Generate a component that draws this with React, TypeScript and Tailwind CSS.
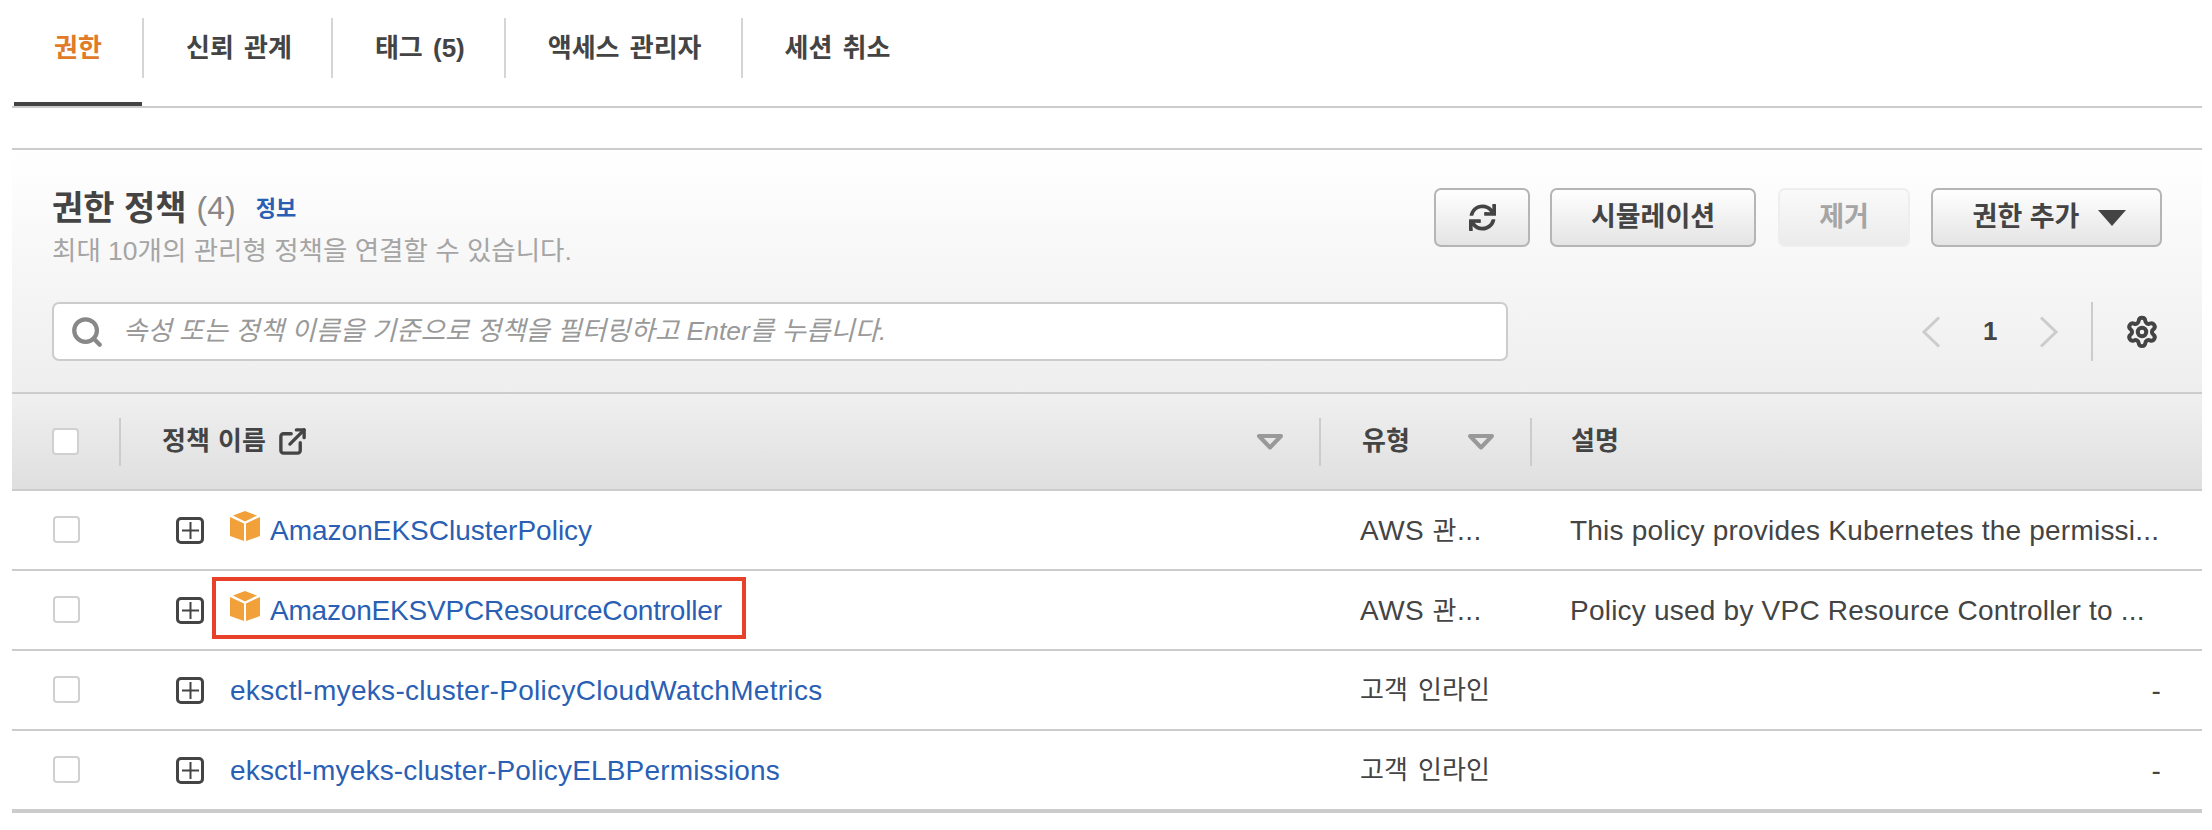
import { ExternalLink, Search, Settings } from 'lucide-react'
import { FaSync } from 'react-icons/fa'

const font = "font-['Liberation_Sans','Noto_Sans_CJK_KR',sans-serif]"
const grid = 'grid grid-cols-[109px_1200px_211px_670px]'

const tabs = ['권한', '신뢰 관계', '태그 (5)', '액세스 관리자', '세션 취소']

const policies = [
  { name: 'AmazonEKSClusterPolicy', aws: true, fit: '', desc: 'This policy provides Kubernetes the permissi...' },
  {
    name: 'AmazonEKSVPCResourceController',
    aws: true,
    marked: true,
    fit: 'tracking-[-0.19px]',
    desc: 'Policy used by VPC Resource Controller to ...',
  },
  { name: 'eksctl-myeks-cluster-PolicyCloudWatchMetrics', aws: false, fit: 'tracking-[0.3px]', desc: '-' },
  { name: 'eksctl-myeks-cluster-PolicyELBPermissions', aws: false, fit: 'tracking-[0.17px]', desc: '-' },
]

function Checkbox({ row }: { row?: boolean }) {
  return <div className={`h-[27px] w-[27px] rounded-[4px] border-2 border-[#d0d0d0] bg-white ${row ? 'mb-[2px]' : ''}`} />
}

function SortIcon() {
  return (
    <svg width="30" height="18" viewBox="0 0 30 18" fill="none">
      <path d="M4 3h22L15 14.500z" stroke="#999" strokeWidth="4" strokeLinejoin="round" />
    </svg>
  )
}

function HeaderDivider() {
  return <div className="h-[48px] w-[2px] shrink-0 bg-[#ccc]" />
}

function AwsCube() {
  return (
    <svg width="30" height="30" viewBox="0 0 30 30" className="mb-[8px] mr-[10px] shrink-0" fill="#f2a03a">
      <path d="M15 0l12 4.500-12 6-12-6z" />
      <path d="M0 6l14 6.500V30L0 25z" />
      <path d="M30 6l-14 6.500V30l14-5z" />
    </svg>
  )
}

function ExpandIcon() {
  return (
    <div className="-ml-[1px] mr-[26px] flex h-[27px] w-[28px] shrink-0 items-center justify-center rounded-[5px] border-[3px] border-[#444]">
      <svg width="19" height="19" viewBox="0 0 19 19" stroke="#444" strokeWidth="2">
        <path d="M9.500 1v17M1 9.500h17" />
      </svg>
    </div>
  )
}

function Chevron({ flip }: { flip?: boolean }) {
  return (
    <svg width="20" height="32" viewBox="0 0 20 32" fill="none" stroke="#ccc" strokeWidth="3" className={flip ? 'rotate-180' : ''}>
      <path d="M18 1.500L3 16l15 14.500" />
    </svg>
  )
}

export default function App() {
  return (
    <div className={`${font} h-[830px] w-[2212px] overflow-hidden bg-white pl-[12px] pr-[10px] text-[#444]`}>
      <div className="flex h-[108px] border-b-2 border-[#ccc] [word-spacing:3px]">
        {tabs.map((tab, i) => (
          <div key={tab} className={`h-[106px] pt-[18px] ${i === 0 ? 'ml-[2px] w-[128px] border-b-4 border-[#444]' : ''}`}>
            <div
              className={`flex h-[60px] items-center text-[26px] font-bold ${
                i === 0 ? 'pl-[40px] text-[#e07b27]' : 'border-l-2 border-[#d5d5d5] pl-[42px] pr-[39px]'
              }`}>
              {tab}
            </div>
          </div>
        ))}
      </div>

      <div className="mt-[40px] flex h-[244px] flex-col border-t-2 border-[#ccc] bg-gradient-to-b from-white to-[#eeeeee] pt-[38px] pl-[40px] pr-[40px]">
        <div className="flex items-start justify-between">
          <div>
            <div className="flex h-[38px] translate-y-[1px] items-center">
              <span className="text-[34px] font-bold">권한 정책</span>
              <span className="ml-[10px] text-[32px] text-[#888]">(4)</span>
              <span className="ml-[20px] text-[22px] font-bold text-[#2a5fb4]">정보</span>
            </div>
            <div className="mt-[8px] h-[33px] text-[26.5px] leading-[34px] text-[#a5a5a5]">최대 10개의 관리형 정책을 연결할 수 있습니다.</div>
          </div>
          <div className="flex">
            <button className="flex h-[59px] w-[96px] items-center justify-center rounded-[7px] border-2 border-[#b5b5b5] bg-gradient-to-b from-white to-[#e4e4e4]">
              <FaSync size={27} color="#444" />
            </button>
            <button className="ml-[20px] flex h-[59px] w-[206px] items-center justify-center rounded-[7px] border-2 border-[#b5b5b5] bg-gradient-to-b from-white to-[#e4e4e4] text-[27px] font-bold">
              시뮬레이션
            </button>
            <button className="ml-[22px] flex h-[59px] w-[132px] items-center justify-center rounded-[7px] border-2 border-[#eee] bg-gradient-to-b from-[#fafafa] to-[#ebebeb] text-[27px] font-bold text-[#a5a5a5]">
              제거
            </button>
            <button className="ml-[21px] flex h-[59px] w-[231px] items-center justify-center gap-[19px] rounded-[7px] border-2 border-[#b5b5b5] bg-gradient-to-b from-white to-[#e4e4e4] pl-[6px] text-[27px] font-bold">
              권한 추가
              <svg width="28" height="16" viewBox="0 0 28 16" fill="#444">
                <path d="M0 0h28L14 16z" />
              </svg>
            </button>
          </div>
        </div>

        <div className="mt-[35px] flex items-center">
          <div className="flex h-[59px] w-[1456px] items-center rounded-[7px] border-2 border-[#ccc] bg-white pl-[16px]">
            <Search size={34} strokeWidth={3} color="#888" className="mr-[19px] shrink-0" />
            <span className="text-[26.5px] italic text-[#999]">속성 또는 정책 이름을 기준으로 정책을 필터링하고 Enter를 누릅니다.</span>
          </div>
          <div className="ml-[413px] flex items-center">
            <Chevron />
            <span className="mx-[42px] text-[26px] font-bold">1</span>
            <Chevron flip />
          </div>
          <div className="ml-[32px] h-[59px] w-[2px] bg-[#ccc]" />
          <Settings size={34} strokeWidth={2.8} color="#444" className="ml-[32px]" />
        </div>
      </div>

      <div className={`${grid} h-[99px] items-center border-t-2 border-b-2 border-[#ccc] bg-gradient-to-b from-[#f0f0f0] to-[#dfdfdf]`}>
        <div className="flex items-center justify-between pl-[40px]">
          <Checkbox />
          <HeaderDivider />
        </div>
        <div className="flex items-center justify-between pl-[41px]">
          <div className="flex items-center gap-[11px] text-[26px] font-bold [word-spacing:1px]">
            정책 이름
            <ExternalLink size={31} strokeWidth={2.6} color="#444" />
          </div>
          <div className="flex items-center gap-[34px]">
            <SortIcon />
            <HeaderDivider />
          </div>
        </div>
        <div className="flex items-center justify-between pl-[41px]">
          <span className="text-[26px] font-bold">유형</span>
          <div className="flex items-center gap-[34px]">
            <SortIcon />
            <HeaderDivider />
          </div>
        </div>
        <div className="pl-[39px] text-[26px] font-bold">설명</div>
      </div>

      {policies.map((policy, i) => (
        <div key={policy.name} className={`${grid} items-center border-[#ccc] ${i === 3 ? 'h-[82px] border-b-4' : 'h-[80px] border-b-2'}`}>
          <div className="pl-[41px]">
            <Checkbox row />
          </div>
          <div className="relative flex h-full items-center pl-[56px]">
            <ExpandIcon />
            {policy.aws && <AwsCube />}
            <span className={`mt-[2px] text-[28px] text-[#2a5fb4] ${policy.fit}`}>{policy.name}</span>
            {policy.marked && <div className="absolute left-[91px] top-[6px] h-[62px] w-[534px] border-4 border-[#e8412a]" />}
          </div>
          <div className="pl-[39px] text-[28px]">
            {policy.aws ? (
              <div className="mt-[2px] tracking-[0.5px]">
                AWS <span className="text-[26px]">관</span>...
              </div>
            ) : (
              <span className="text-[26px] [word-spacing:3px]">고객 인라인</span>
            )}
          </div>
          <div className={`mt-[2px] pl-[38px] text-[28px] tracking-[0.22px] ${policy.desc === '-' ? 'pr-[41px] text-right' : ''}`}>{policy.desc}</div>
        </div>
      ))}
    </div>
  )
}
